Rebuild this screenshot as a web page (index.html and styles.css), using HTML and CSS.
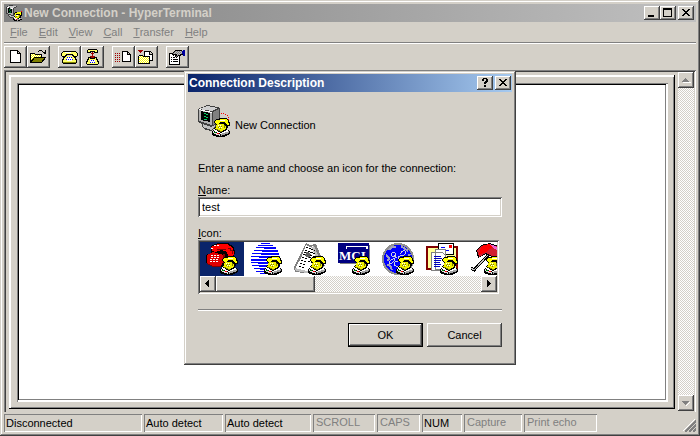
FILE: index.html
```html
<!DOCTYPE html>
<html lang="en">
<head>
<meta charset="utf-8">
<title>New Connection - HyperTerminal</title>
<link rel="stylesheet" href="styles.css">
</head>
<body>
<svg class="defs" aria-hidden="true">
  <defs>
    <pattern id="dither" width="2" height="2" patternUnits="userSpaceOnUse"><path fill="#ff0" d="M0 0h2v2H0z"/><path fill="#fff" d="M0 0h1v1H0zM1 1h1v1H1z"/></pattern>
    <pattern id="shade" width="2" height="2" patternUnits="userSpaceOnUse"><path fill="#c0c0c0" d="M0 0h2v2H0z"/><path fill="#808080" d="M0 0h1v1H0zM1 1h1v1H1z"/></pattern>
    <pattern id="pink" width="2" height="2" patternUnits="userSpaceOnUse"><path fill="#f00" d="M0 0h2v2H0z"/><path fill="#a05060" d="M0 0h1v1H0zM1 1h1v1H1z"/></pattern>
    <symbol id="phone" viewBox="0 0 18 19">
      <path fill="#000" d="M4 1h3V0h7l3 2 1 3v3h-2v1l-1 1v2l3 1v3l-8 4H8l-8-3v-4l2-2 2-3V6L2 5V3z"/>
      <path fill="#fff" d="M2 11l7 4 6-3 2 1-8 3-7-3z"/>
      <path fill="#e0e0e0" d="M1 13l7 3v2l-7-3z"/>
      <path fill="#a0a0a0" d="M9 16l8-3v2l-8 3z"/>
      <path fill="#f0f000" d="M5 6h7l2 3v2l-5 3-6-3z"/>
      <path fill="#ff0" d="M3 3l2-1h3V1h6l2 2 1 3v1h-2l-1-2-2-1H8L6 6H4L3 5z"/>
      <path fill="#000" d="M7 5h5v1H7zM12 6h1v1h-1z"/>
      <path fill="#808000" d="M12 7h1v3h-1zM4 11h2v1h2v1h2v1H8v-1H6v-1H4z"/>
      <path fill="#fff" d="M6 7h1v1H6zM8 7h1v1H8zM7 9h1v1H7zM9 9h1v1H9zM8 2h5v1H8z"/>
      <path fill="#808000" d="M7 8h1v1H7zM9 8h1v1H9zM6 9h1v1H6zM8 10h1v1H8z"/>
      <path fill="#f00" d="M5 15h2v1H5z"/><path fill="#080" d="M2 14h2v1H2z"/>
    </symbol>
    <symbol id="computer" viewBox="0 0 32 32">
      <path fill="#404040" d="M0 4l9-4 11 2 2 2v13l-5 5-4 4-5-1-4-3v-3l-4-2z"/>
      <path fill="#d0d0d0" d="M1 4l8-3 11 2-6 3z"/>
      <path fill="#fff" d="M1 4l13 3v1L1 5z"/>
      <path fill="#b0b0b0" d="M1 5l13 3v12L1 16z"/>
      <path fill="#808080" d="M15 7l6-3v12l-6 4z"/>
      <path fill="#000" d="M3 6l9 2v9l-9-2z"/>
      <path stroke="#00d060" fill="none" d="M6 8.500h2M8 9.500h2M6 11.500h2M8 12.500h2M6 14.500h3"/>
      <path fill="#c0c0c0" d="M5 19l8 3 4-2v2l-4 3-8-3z"/>
      <path fill="#f00" d="M23 8h1v1h-1zM25 8h1v1h-1zM27 9h1v1h-1zM29 10h1v1h-1zM30 12h1v1h-1zM30 14h1v1h-1z"/>
      <use href="#phone" x="14" y="13" width="18" height="19"/>
    </symbol>
  </defs>
</svg>

<div class="window">
  <header class="titlebar">
    <svg class="app-icon" viewBox="0 0 32 32" aria-hidden="true"><use href="#computer"/></svg>
    <h1>New Connection - HyperTerminal</h1>
    <button class="caption" aria-label="Minimize"><svg viewBox="0 0 12 10"><path d="M2 7h6v2H2z"/></svg></button>
    <button class="caption" aria-label="Maximize"><svg viewBox="0 0 12 10"><path d="M1 0h9v9H1zM2 2v6h7V2z" fill-rule="evenodd"/></svg></button>
    <button class="caption close" aria-label="Close"><svg viewBox="0 0 12 10"><path d="M2 1h2v1h1v1h2V2h1V1h2v1H9v1H8v1H7v1h1v1h1v1h1v1H8V7H7V6H5v1H4v1H2V7h1V6h1V5h1V4H4V3H3V2H2z"/></svg></button>
  </header>

  <nav class="menu">
    <button><u>F</u>ile</button>
    <button><u>E</u>dit</button>
    <button><u>V</u>iew</button>
    <button><u>C</u>all</button>
    <button><u>T</u>ransfer</button>
    <button><u>H</u>elp</button>
  </nav>

  <div class="toolbar">
    <div class="group">
      <button aria-label="New"><svg viewBox="0 0 19 18"><path fill="#fff" stroke="#000" d="M4.500 2.500h7l3 3v9h-10zM11.500 2.500v3h3"/></svg></button>
      <button aria-label="Open"><svg viewBox="0 0 19 18"><path fill="url(#dither)" stroke="#000" d="M1.500 14.500v-9h4l1 1h6v8z"/><path fill="#808000" stroke="#000" d="M1.500 14.500l4-5h11l-4 5z"/><path fill="none" stroke="#000" d="M9 3.500h1M10 2.500h3M13 3.500h1M14 4.500h3M15 5.500h2M16.500 2v4"/></svg></button>
    </div>
    <div class="group">
      <button aria-label="Call"><svg viewBox="0 0 19 18"><path d="M4 8h11v1h1v2h1v4h-1v1H3v-1H2v-4h1V9h1z"/><path fill="#ff6" d="M5 8h9v2h1v2h1v2H3v-2h1v-2h1z"/><path d="M3 3h13v1h1v1h1v3h-1v1h-4V8h-1V7H7v1H6v1H2V8H1V5h1V4h1z"/><path fill="#ff6" d="M3 4h13v1h1v3h-3V7h-1V6H6v1H5v1H2V5h1z"/><path fill="#fff" d="M7 9h5v4H7zM5 4h6v1H5z"/><path fill="#00f" d="M7 9h1v1H7zM9 9h1v1H9zM11 9h1v1h-1zM6 11h1v1H6zM8 11h1v1H8zM10 11h1v1h-1zM12 11h1v1h-1z"/><path d="M3 14h13v1H3z" fill="#808000"/></svg></button>
      <button aria-label="Disconnect"><svg viewBox="0 0 19 18"><path d="M5 1h9v1h1v3h-4V4H8v1H4V2h1z"/><path fill="#ff6" d="M5 2h9v2h-2V3H7v1H5z"/><path fill="#a00000" d="M9 4h1v1h1v1h-1v2h2v1h-1v1H8V9H7V8h2V6H8V5h1z"/><path d="M5 9h3v1h3V9h3v2h1v2h1v3h-1v1H4v-1H3v-3h1v-2h1z"/><path fill="#ff6" d="M6 10h1v1h5v-1h1v2h1v2h1v2H4v-2h1v-2h1z"/><path fill="#fff" d="M7 12h5v3H7z"/><path fill="#00f" d="M8 12h1v1H8zM10 12h1v1h-1zM7 14h1v1H7zM9 14h1v1H9zM11 14h1v1h-1z"/></svg></button>
    </div>
    <div class="group">
      <button aria-label="Send"><svg viewBox="0 0 19 18"><path fill="none" stroke="#a00000" stroke-dasharray="1 1" d="M1 5.500h6M1 7.500h6M1 9.500h6M1 11.500h6M1 13.500h6"/><path fill="#fff" stroke="#000" d="M8.500 3.500h5l3 3v7h-8zM13.500 3.500v3h3"/></svg></button>
      <button aria-label="Receive"><svg viewBox="0 0 19 18"><path fill="#a00000" d="M1 2h5v1H5v1H4v1H3V4H2V3H1z"/><path fill="#fff" stroke="#000" d="M7.500 3.500h6l2 2v7h-8zM12.500 3.500v3h3"/><path fill="url(#dither)" stroke="#000" d="M1.500 15.500v-7l1-1h3l1 1h6v7z"/></svg></button>
    </div>
    <div class="group">
      <button aria-label="Properties"><svg viewBox="0 0 19 18"><path fill="#fff" stroke="#000" d="M1.500 5.500h10v11h-10z"/><path stroke="#000" fill="none" d="M3 9.500h1M5 9.500h2M3 11.500h1M5 11.500h5M3 13.500h1M5 13.500h5"/><path fill="url(#shade)" stroke="#000" d="M4.500 5.500l3-3h6l1 1v3l-4 1-2 2-1-1 1-2h-2l-1 1z"/><path fill="#0000a0" d="M15 2h2v6h-2V6h-1V3h1z"/></svg></button>
    </div>
  </div>

  <main class="client">
    <div class="terminal"><textarea aria-label="Terminal" readonly></textarea></div>
    <div class="scroll-y">
      <button class="arrow" aria-label="Scroll up" disabled><svg viewBox="0 0 12 12"><path fill="#fff" d="M3 8h8v1H3z"/><path d="M5 4h1v1h1v1h1v1h1v1H2V7h1V6h1V5h1z"/></svg></button>
      <button class="arrow" aria-label="Scroll down" disabled><svg viewBox="0 0 12 12"><path fill="#fff" d="M10 5v1H9v1H8v1H7v1H6V8z"/><path d="M2 4h7v1H8v1H7v1H6v1H5V7H4V6H3V5H2z"/></svg></button>
    </div>
  </main>

  <footer class="status">
    <span class="cell-state">Disconnected</span>
    <span class="cell-mode">Auto detect</span>
    <span class="cell-rate">Auto detect</span>
    <span class="cell-scroll off">SCROLL</span>
    <span class="cell-caps off">CAPS</span>
    <span class="cell-num">NUM</span>
    <span class="cell-capture off">Capture</span>
    <span class="cell-echo off">Print echo</span>
    <svg class="grip" viewBox="0 0 13 13" aria-hidden="true"><path stroke="#fff" fill="none" d="M0 12L12 0M4 12l8-8M8 12l4-4"/><path stroke="#808080" stroke-width="2" fill="none" d="M2 13L13 2M6 13l7-7M10 13l3-3"/></svg>
  </footer>
</div>

<div class="overlay">
  <form class="dialog" role="dialog" aria-labelledby="dialog-title">
    <div class="titlebar active">
      <h2 id="dialog-title">Connection Description</h2>
      <button type="button" class="caption" aria-label="Help"><svg viewBox="0 0 12 10"><path d="M4 0h4v1h1v3H8v1H7v1H5V4h1V3h1V1H5v2H3V1h1zM5 7h2v2H5z"/></svg></button>
      <button type="button" class="caption close" aria-label="Close"><svg viewBox="0 0 12 10"><path d="M2 1h2v1h1v1h2V2h1V1h2v1H9v1H8v1H7v1h1v1h1v1h1v1H8V7H7V6H5v1H4v1H2V7h1V6h1V5h1V4H4V3H3V2H2z"/></svg></button>
    </div>
    <div class="dialog-body">
      <div class="summary">
        <svg class="icon" viewBox="0 0 32 32" aria-hidden="true"><use href="#computer"/></svg>
        <span>New Connection</span>
      </div>
      <p>Enter a name and choose an icon for the connection:</p>
      <label for="name"><u>N</u>ame:</label>
      <input id="name" type="text" value="test">
      <span id="icon-label"><u>I</u>con:</span>
      <div class="picker">
        <div class="choices" role="listbox" aria-labelledby="icon-label">
          <button type="button" role="option" aria-selected="true" aria-label="Red telephone"><svg class="icon" viewBox="0 0 32 32"><path fill="#000" d="M5 3l7-3h10l6 4 1 6-2 4-4 1-5 9H8l-8-4v-8l5-2z"/><path fill="#e00000" d="M1 12l6-3 11 3v6l-3 5H7l-6-3z"/><path fill="#f00" d="M5 4l7-3h9l6 4 1 6-3 3-3-1-1-4-5-2-7 2-3-1z"/><path fill="#800000" d="M11 6h9v1h-9zM22 5h3v2h2v4h-1V8h-2V6h-2zM1 20l6 3h8v1H7l-6-3zM17 11h2v6h-1v3h-1z"/><path stroke="#fff" stroke-dasharray="2 1" fill="none" d="M5 12.500h8M5 14.500h8M4 16.500h8M4 18.500h8M8 2.500h5M5 5.500h3"/><use href="#phone" x="14" y="13" width="18" height="19"/></svg></button>
          <button type="button" role="option" aria-selected="false" aria-label="Striped globe"><svg class="icon" viewBox="0 0 32 32"><path fill="#00f" d="M11 0h9v1h-9zM8 2h15v1H8zM6 4h20v2H14V5H6zM4 7h24v2H12V8H4zM2 10h27v2H11v-1H2zM1 13h29v2H9v-1H1zM1 16h30v2H1zM1 19h30v2H8v-1H1zM2 22h28v2H9v-1H2zM4 25h25v2H10v-1H4zM6 28h19v1H6zM10 30h11v1H10z"/><use href="#phone" x="14" y="13" width="18" height="19"/></svg></button>
          <button type="button" role="option" aria-selected="false" aria-label="Newspaper"><svg class="icon" viewBox="0 0 32 32"><path fill="#808080" d="M12 0l4 2 6-1 9 22-12 8-18-2-1-5 5-10z"/><path fill="#fff" d="M12 2l4 2 4-1 6 14-8 13-15-3-1-3 5-9z"/><path fill="#c0c0c0" d="M1 25l8 2 9 2 1 2-17-3zM17 4l3-1 8 18-2 1z"/><path fill="none" stroke="#000" stroke-dasharray="2 1" d="M12 4l9 4M11 7l10 4M10 9l4 2M9 11l5 2M8 14l5 2M16 12l7 3M7 17l5 2M15 14l6 3M6 20l5 2M5 23l5 2M14 18l4 2"/><path fill="#606060" d="M12 9h2l3 2-2 4-4-2z"/><use href="#phone" x="14" y="13" width="18" height="19"/></svg></button>
          <button type="button" role="option" aria-selected="false" aria-label="MCI"><svg class="icon" viewBox="0 0 32 32"><path fill="#808080" d="M2 2h30v19H2z"/><path fill="#000080" d="M0 0h31v20H0z"/><path fill="#fff" d="M8 3h22v1H9v2H8zM28 4h2v2h-2z"/><text class="mci" x="1" y="17">MCI</text><use href="#phone" x="14" y="13" width="18" height="19"/></svg></button>
          <button type="button" role="option" aria-selected="false" aria-label="Monogram"><svg class="icon" viewBox="0 0 32 32"><circle cx="16" cy="16" r="16" fill="#909090"/><circle cx="16" cy="16" r="14" fill="#00f"/><path fill="none" stroke="#a0a0c0" stroke-width="2" d="M7 7q3-4 7-3M19 3l7 5M4 12q4 2 2 6M5 22q3-2 5 5M28 11l-2 3"/><path fill="none" stroke="#d0d0e0" d="M13 9q-5 0-3 4 3 2 4-3-1 9-5 11-3-1 0-4l6-3M18 11q4-6 6-2-1 4-6 4-3 1-1 3 2 1 5-2M16 18q-4 0-4 4l4 2"/><use href="#phone" x="14" y="13" width="18" height="19"/></svg></button>
          <button type="button" role="option" aria-selected="false" aria-label="Letters"><svg class="icon" viewBox="0 0 32 32"><path fill="#800000" d="M0 3h32v24H0z"/><path fill="#ff9" d="M2 5h28v20H2z"/><path fill="#fff" stroke="#000" d="M12.500 0.500h15v11h-15z"/><path fill="#f00" d="M23 2h3v3h-3z"/><path fill="#00f" d="M15 4h4v1h-4zM16 7h7v1h-7z"/><path fill="#fff" stroke="#808080" d="M9.500 6.500h10v20h-10zM5.500 9.500h11l3 3v15h-14z"/><path fill="none" stroke="#0000c0" d="M8 13.500h7M8 15.500h8M8 17.500h7M8 19.500h6M8 21.500h7M8 23.500h6"/><use href="#phone" x="14" y="13" width="18" height="19"/></svg></button>
          <button type="button" role="option" aria-selected="false" aria-label="Umbrella"><svg class="icon" viewBox="0 0 32 32"><path fill="none" stroke="#000" stroke-width="3" d="M19 11L4 27l-3-2"/><path fill="none" stroke="#c0c0c0" d="M19 11L4 27l-3-2"/><path fill="#000" d="M6 7l5-5 9-2 8 3 4 7v14l-6-2-3-8-7-3-8 4z"/><path fill="#d02030" d="M7 7l5-4 8-2 8 3 3 7v11l-5-1-2-7-8-4-7 4z"/><path fill="#f00" d="M13 2l7-1 4 2-8 6-7 3 1-5z"/><path fill="#f060d0" d="M20 1l5 2 5 5-6-2z"/><use href="#phone" x="14" y="13" width="18" height="19"/></svg></button>
        </div>
        <div class="scroll-x">
          <button type="button" class="arrow" aria-label="Scroll left"><svg viewBox="0 0 12 12"><path d="M7 2v7H6V8H5V7H4V6H3V5h1V4h1V3h1V2z"/></svg></button>
          <div class="thumb"></div>
          <button type="button" class="arrow" aria-label="Scroll right"><svg viewBox="0 0 12 12"><path d="M4 2h1v1h1v1h1v1h1v1H7v1H6v1H5v1H4z"/></svg></button>
        </div>
      </div>
      <hr>
      <div class="actions">
        <button type="submit" class="push default">OK</button>
        <button type="button" class="push">Cancel</button>
      </div>
    </div>
  </form>
</div>
</body>
</html>
```
FILE: styles.css
```css
:root {
  --face: #d4d0c8;
  --shadow: #808080;
  --dark: #404040;
  --track: repeating-conic-gradient(#fff 0 25%, var(--face) 0 50%) 0 0 / 2px 2px;
}

* { box-sizing: border-box; }

body {
  margin: 0;
  background: var(--face);
  color: #000;
  font: 11px/14px "Liberation Sans", Arial, sans-serif;
}

button, input, textarea {
  margin: 0;
  padding: 0;
  border: 0;
  border-radius: 0;
  outline: 0;
  font: inherit;
  color: inherit;
}

h1, h2, p { margin: 0; font-size: 12px; line-height: 18px; }
u { text-underline-offset: 1px; }
svg { display: block; flex: none; shape-rendering: crispEdges; }
.defs { position: absolute; width: 0; height: 0; }
.icon { width: 32px; height: 32px; }

.window {
  display: flex;
  flex-direction: column;
  min-height: 100vh;
  padding: 4px;
  box-shadow: inset -1px -1px var(--dark), inset 1px 1px var(--face), inset -2px -2px var(--shadow), inset 2px 2px #fff;
}

.titlebar {
  display: flex;
  align-items: center;
  height: 18px;
  padding-right: 2px;
  background: linear-gradient(90deg, #808080, #c0c0c0);
  color: var(--face);
}
.titlebar.active {
  padding-right: 1px;
  background: linear-gradient(90deg, #0a246a, #a6caf0);
  color: #fff;
}
.titlebar h1, .titlebar h2 { flex: 1; padding-left: 2px; white-space: nowrap; }
.titlebar h2 { padding-left: 1px; }
.app-icon { width: 16px; height: 16px; margin-left: 2px; }

.caption, .toolbar button, .arrow, .thumb, .push {
  display: flex;
  align-items: center;
  justify-content: center;
  background: var(--face);
  color: #000;
  box-shadow: inset -1px -1px var(--dark), inset 1px 1px #fff, inset -2px -2px var(--shadow);
}
.caption { width: 16px; height: 14px; }
.caption svg { width: 12px; height: 10px; }
.caption.close { margin-left: 2px; }

.menu { display: flex; height: 20px; padding-left: 6px; gap: 11px; }
.menu button { background: none; color: var(--shadow); }

.toolbar {
  display: flex;
  gap: 8px;
  padding: 3px 0 2px;
  border-top: 1px solid var(--shadow);
  box-shadow: inset 0 1px #fff;
}
.group { display: flex; }
.toolbar button { width: 23px; height: 22px; }
.toolbar svg { width: 19px; height: 18px; }

.client {
  flex: 1;
  display: flex;
  padding: 2px 2px 1px;
  box-shadow: inset 1px 1px var(--shadow), inset -1px 0 #fff, inset 2px 2px var(--dark);
}
.terminal {
  flex: 1;
  display: flex;
  margin: 3px 3px 2px;
  padding: 8px 7px 7px 8px;
  box-shadow: inset -1px -1px #000, inset 2px 2px #fff, inset -2px -2px var(--shadow);
}
.terminal textarea {
  flex: 1;
  padding: 3px;
  resize: none;
  background: #fff;
  box-shadow: inset 1px 1px var(--shadow), inset -2px -2px #fff, inset 2px 2px #000, inset -3px -3px var(--shadow);
}

.scroll-y {
  display: flex;
  flex-direction: column;
  justify-content: space-between;
  width: 16px;
  background: var(--track);
}
.arrow { width: 16px; height: 16px; }
.arrow svg { width: 12px; height: 12px; }
.arrow:disabled svg { fill: var(--shadow); }

.status { display: flex; gap: 2px; height: 20px; padding-top: 2px; }
.status span {
  padding: 2px 2px 0;
  box-shadow: inset 1px 1px var(--shadow), inset -1px -1px #fff;
  white-space: nowrap;
}
.status .off { color: var(--shadow); padding: 1px 3px; }
.status .cell-state { flex: 0 1 138px; }
.cell-mode { width: 79px; }
.cell-rate { width: 86px; }
.cell-scroll { width: 62px; }
.cell-caps { width: 43px; }
.cell-num { width: 40px; }
.cell-capture { width: 58px; }
.cell-echo { width: 73px; }
.grip { width: 13px; height: 13px; margin: auto 0 0 auto; }

.overlay {
  position: absolute;
  inset: 0;
  display: flex;
  align-items: center;
  justify-content: center;
}
.dialog {
  width: 332px;
  padding: 3px 4px 4px;
  background: var(--face);
  box-shadow: inset -1px -1px var(--dark), inset 1px 1px var(--face), inset -2px -2px var(--shadow), inset 2px 2px #fff;
}
.dialog-body { display: flex; flex-direction: column; padding: 13px 10px 14px; }
.summary { display: flex; align-items: center; gap: 5px; padding-bottom: 24px; }
.summary span { padding-top: 8px; }
.dialog-body p { font-size: 11px; line-height: 14px; padding-bottom: 8px; }
.dialog-body input {
  height: 20px;
  margin-bottom: 9px;
  padding: 2px 4px;
  background: #fff;
}
.dialog-body input, .picker {
  box-shadow: inset 1px 1px var(--shadow), inset -1px -1px #fff, inset 2px 2px var(--dark), inset -2px -2px var(--face);
}
.picker { margin-right: 3px; padding: 2px; }
.choices { display: flex; height: 34px; overflow: hidden; background: #fff; }
.choices button { flex: none; width: 44px; padding: 1px 6px; background: #fff; }
.choices [aria-selected="true"] { background: #0a246a; }
.mci { font: bold 13px "Liberation Serif", serif; fill: #fff; }
.scroll-x { display: flex; height: 16px; background: var(--track); }
.thumb { width: 99px; margin-right: auto; }

hr {
  width: 100%;
  margin: 15px 0 12px;
  border: 0;
  border-top: 1px solid var(--shadow);
  border-bottom: 1px solid #fff;
}
.actions { display: flex; justify-content: flex-end; gap: 4px; }
.push { width: 75px; height: 24px; }
.push.default { border: 1px solid #000; }
```
